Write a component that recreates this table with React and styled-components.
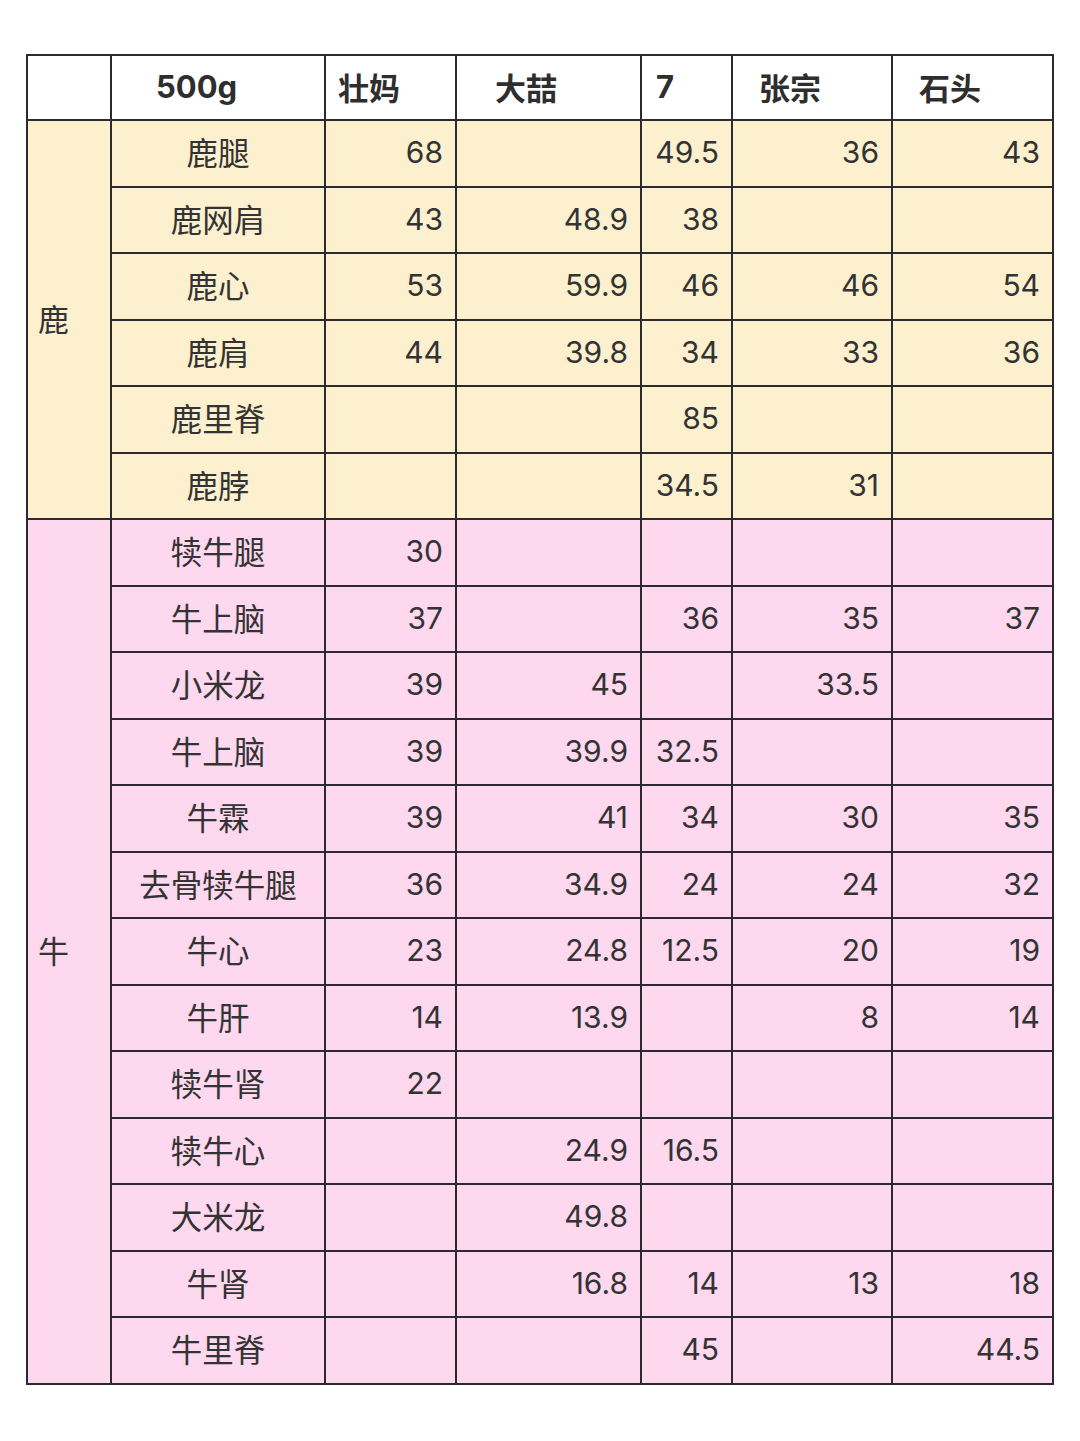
import { createGlobalStyle, styled } from "styled-components";

const GlobalStyle = createGlobalStyle`
  html, body {
    margin: 0;
    padding: 0;
    background: #ffffff;
  }
`;

const Page = styled.div`
  padding: 54px 0 54px 26px;
  font-family: Inter, "Noto Sans CJK SC", sans-serif;
  color: #333333;
`;

const Table = styled.table`
  width: 1028px;
  table-layout: fixed;
  border-collapse: collapse;
  border: 2px solid #2b2a30;
`;

const Row = styled.tr`
  height: ${(p) => p.$h || 66.5}px;
  background: ${(p) => p.$bg || "#ffffff"};
`;

const HeadCell = styled.th`
  border: 2px solid #2b2a30;
  text-align: left;
  padding: 0 0 2px ${(p) => p.$indent || 12}px;
  font-size: 31px;
  font-weight: 700;
  color: #2e2e2e;
`;

const GroupCell = styled.td`
  border: 2px solid #2b2a30;
  padding: 0 0 4px 10px;
  font-size: 31px;
  vertical-align: middle;
`;

const NameCell = styled.td`
  border: 2px solid #2b2a30;
  text-align: center;
  font-size: 31.5px;
  padding: 0 0 4px 0;
`;

const NumCell = styled.td`
  border: 2px solid #2b2a30;
  text-align: right;
  padding: 0 12px 2px 0;
  font-size: 30px;
`;

const columns = [
  { label: "", width: 84, indent: 12 },
  { label: "500g", width: 214, indent: 44 },
  { label: "壮妈", width: 131, indent: 12 },
  { label: "大喆", width: 185, indent: 38 },
  { label: "7", width: 91, indent: 14 },
  { label: "张宗", width: 160, indent: 26 },
  { label: "石头", width: 161, indent: 26 },
];

const groups = [
  {
    name: "鹿",
    bg: "#fcf0cf",
    rows: [
      ["鹿腿", "68", "", "49.5", "36", "43"],
      ["鹿网肩", "43", "48.9", "38", "", ""],
      ["鹿心", "53", "59.9", "46", "46", "54"],
      ["鹿肩", "44", "39.8", "34", "33", "36"],
      ["鹿里脊", "", "", "85", "", ""],
      ["鹿脖", "", "", "34.5", "31", ""],
    ],
  },
  {
    name: "牛",
    bg: "#fdd8ee",
    rows: [
      ["犊牛腿", "30", "", "", "", ""],
      ["牛上脑", "37", "", "36", "35", "37"],
      ["小米龙", "39", "45", "", "33.5", ""],
      ["牛上脑", "39", "39.9", "32.5", "", ""],
      ["牛霖", "39", "41", "34", "30", "35"],
      ["去骨犊牛腿", "36", "34.9", "24", "24", "32"],
      ["牛心", "23", "24.8", "12.5", "20", "19"],
      ["牛肝", "14", "13.9", "", "8", "14"],
      ["犊牛肾", "22", "", "", "", ""],
      ["犊牛心", "", "24.9", "16.5", "", ""],
      ["大米龙", "", "49.8", "", "", ""],
      ["牛肾", "", "16.8", "14", "13", "18"],
      ["牛里脊", "", "", "45", "", "44.5"],
    ],
  },
];

const App = () => {
  return (
    <Page>
      <GlobalStyle />
      <Table>
        <colgroup>
          {columns.map((c, i) => (
            <col key={i} style={{ width: c.width }} />
          ))}
        </colgroup>
        <thead>
          <Row $h={65}>
            {columns.map((c, i) => (
              <HeadCell key={i} $indent={c.indent}>
                {c.label}
              </HeadCell>
            ))}
          </Row>
        </thead>
        <tbody>
          {groups.map((g) =>
            g.rows.map((r, i) => (
              <Row key={g.name + i} $bg={g.bg}>
                {i === 0 && <GroupCell rowSpan={g.rows.length}>{g.name}</GroupCell>}
                <NameCell>{r[0]}</NameCell>
                {r.slice(1).map((v, j) => (
                  <NumCell key={j}>{v}</NumCell>
                ))}
              </Row>
            ))
          )}
        </tbody>
      </Table>
    </Page>
  );
};

export default App;
